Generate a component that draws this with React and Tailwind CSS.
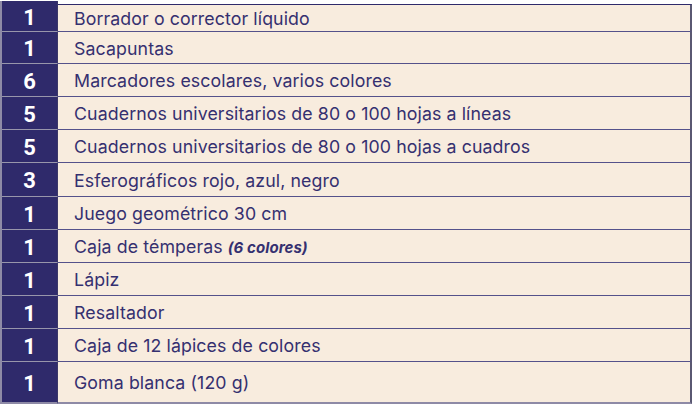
const items = [
  { n: '1', text: 'Borrador o corrector líquido', h: 'h-[31px]', first: true },
  { n: '1', text: 'Sacapuntas', h: 'h-[32px]' },
  { n: '6', text: 'Marcadores escolares, varios colores', h: 'h-[33px]' },
  { n: '5', text: 'Cuadernos universitarios de 80 o 100 hojas a líneas', h: 'h-[33px]' },
  { n: '5', text: 'Cuadernos universitarios de 80 o 100 hojas a cuadros', h: 'h-[33px]' },
  { n: '3', text: 'Esferográficos rojo, azul, negro', h: 'h-[34px]' },
  { n: '1', text: 'Juego geométrico 30 cm', h: 'h-[33px]' },
  { n: '1', text: 'Caja de témperas', extra: '(6 colores)', h: 'h-[33px]' },
  { n: '1', text: 'Lápiz', h: 'h-[33px]' },
  { n: '1', text: 'Resaltador', h: 'h-[33px]' },
  { n: '1', text: 'Caja de 12 lápices de colores', h: 'h-[33px]' },
  { n: '1', text: 'Goma blanca (120 g)', h: 'h-[42px]', last: true },
];

export default function App() {
  return (
    <div className="w-[694px] h-[410px] bg-white pt-[1px] font-['Inter',sans-serif]">
      <div className="w-[692px] flex flex-col border-l-2 border-[#8e8aa6]">
        {items.map((it, i) => (
          <div key={i} className={`flex ${it.h}`}>
            {/* quantity cell */}
            <div
              className={`w-[56px] shrink-0 bg-[#2f2a6b] flex items-center justify-center border-r border-[#3b3768] ${
                it.last ? 'border-b-2 border-b-[#8e8aa6]' : 'border-b border-b-[#9896ab]'
              }`}
            >
              <span className="text-white font-bold text-[22px] leading-none font-['Roboto',sans-serif] mt-[3px]">
                {it.n}
              </span>
            </div>
            {/* description cell */}
            <div className={`flex-1 min-h-0 flex flex-col ${it.first ? 'pt-[3px] bg-white' : ''}`}>
              <div
                className={`flex-1 min-h-0 bg-[#f8ecde] flex items-center pl-[16px] border-r-2 border-[#5a5872] text-[#353070] text-[17.75px] leading-[20px] tracking-[0.1px] ${
                  it.first ? 'border-t border-t-[#2f2a6b]' : ''
                } ${it.last ? 'border-b-2 border-b-[#8e8aa6]' : 'border-b border-b-[#55518a]'}`}
              >
                <span className="mt-[2px]">
                  {it.text}
                  {it.extra && (
                    <span className="ml-[5px] font-bold italic text-[15px]">{it.extra}</span>
                  )}
                </span>
              </div>
            </div>
          </div>
        ))}
      </div>
    </div>
  );
}
